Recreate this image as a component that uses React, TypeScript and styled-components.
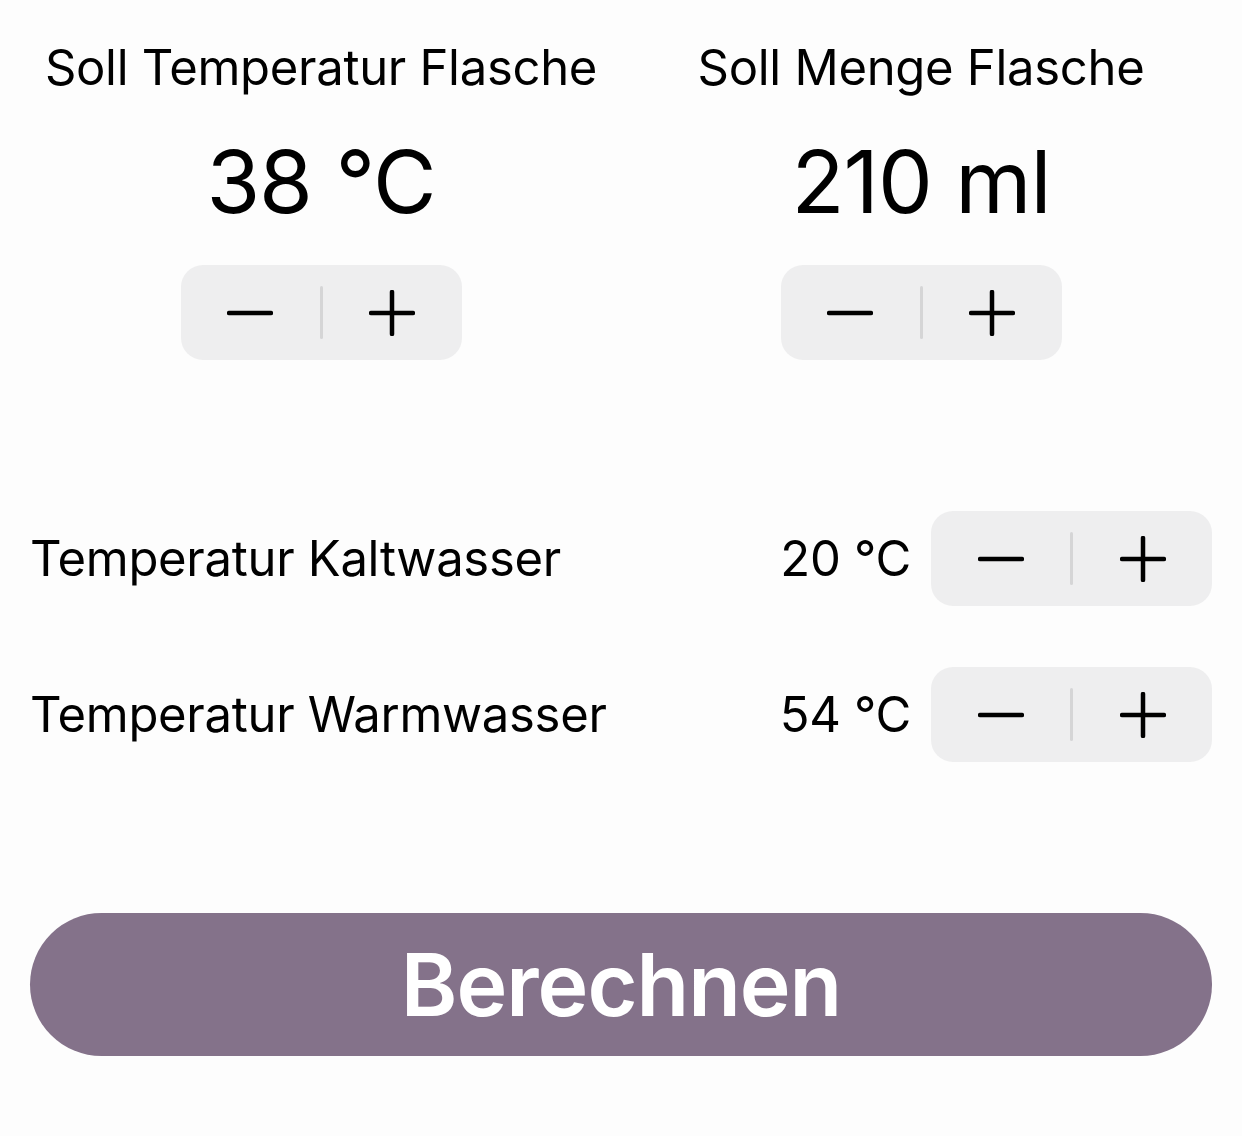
import React, { useState } from "react";
import styled, { createGlobalStyle } from "styled-components";

const GlobalStyle = createGlobalStyle`
  html, body {
    margin: 0;
    padding: 0;
    background: #fdfdfd;
  }
  body {
    font-family: Inter, "Liberation Sans", sans-serif;
    color: #000;
  }
`;

const Page = styled.div`
  width: 1242px;
  height: 1136px;
  box-sizing: border-box;
  padding: 0 30px;
  background: #fdfdfd;
  display: flex;
  flex-direction: column;
`;

const TopGrid = styled.div`
  display: grid;
  grid-template-columns: 1fr 1fr;
  margin: 0 -9px;
`;

const Column = styled.div`
  display: flex;
  flex-direction: column;
  align-items: center;
`;

const Title = styled.div`
  margin-top: 36px;
  font-size: 49px;
  line-height: 64px;
  letter-spacing: -0.3px;
  white-space: nowrap;
`;

const BigValue = styled.div`
  margin-top: 27px;
  font-size: 87px;
  line-height: 110px;
  letter-spacing: -1px;
  white-space: nowrap;
`;

const StepperBox = styled.div<{ $top?: number }>`
  margin-top: ${(p) => p.$top ?? 0}px;
  width: 281px;
  height: 95px;
  flex-shrink: 0;
  border-radius: 22px;
  background: #eeeeef;
  display: flex;
  align-items: center;
`;

const StepButton = styled.button`
  flex: 1;
  height: 100%;
  border: 0;
  background: transparent;
  padding: 0;
  display: flex;
  align-items: center;
  justify-content: center;
  cursor: pointer;
`;

const Divider = styled.div`
  width: 3px;
  height: 53px;
  border-radius: 2px;
  background: #d5d5d6;
`;

const Rows = styled.div`
  margin-top: 151px;
  display: flex;
  flex-direction: column;
  gap: 61px;
`;

const Row = styled.div`
  display: flex;
  align-items: center;
  height: 95px;
`;

const Label = styled.div`
  flex: 1;
  font-size: 49px;
  letter-spacing: -0.3px;
  white-space: nowrap;
`;

const RowValue = styled.div`
  font-size: 49px;
  letter-spacing: -0.3px;
  margin-right: 20px;
  white-space: nowrap;
`;

const CalcButton = styled.button`
  margin-top: 151px;
  height: 143px;
  width: 100%;
  border: 0;
  border-radius: 72px;
  background: #84728a;
  color: #fff;
  font-family: Inter, "Liberation Sans", sans-serif;
  font-size: 86px;
  font-weight: 600;
  letter-spacing: -1px;
  cursor: pointer;
`;

const Minus = () => (
  <svg width="46" height="46" viewBox="0 0 46 46">
    <line x1="2" y1="23" x2="44" y2="23" stroke="#000" strokeWidth="4.5" strokeLinecap="round" />
  </svg>
);

const Plus = () => (
  <svg width="46" height="46" viewBox="0 0 46 46">
    <line x1="2" y1="23" x2="44" y2="23" stroke="#000" strokeWidth="4.5" strokeLinecap="round" />
    <line x1="23" y1="2" x2="23" y2="44" stroke="#000" strokeWidth="4.5" strokeLinecap="round" />
  </svg>
);

const Stepper = ({
  top,
  onChange,
}: {
  top?: number;
  onChange: (d: number) => void;
}) => (
  <StepperBox $top={top}>
    <StepButton aria-label="weniger" onClick={() => onChange(-1)}>
      <Minus />
    </StepButton>
    <Divider />
    <StepButton aria-label="mehr" onClick={() => onChange(1)}>
      <Plus />
    </StepButton>
  </StepperBox>
);

export default function App() {
  const [target, setTarget] = useState(38);
  const [amount, setAmount] = useState(210);
  const [cold, setCold] = useState(20);
  const [warm, setWarm] = useState(54);

  return (
    <>
      <GlobalStyle />
      <Page>
        <TopGrid>
          <Column>
            <Title>Soll Temperatur Flasche</Title>
            <BigValue>{target} °C</BigValue>
            <Stepper top={28} onChange={(d) => setTarget(target + d)} />
          </Column>
          <Column>
            <Title>Soll Menge Flasche</Title>
            <BigValue>{amount} ml</BigValue>
            <Stepper top={28} onChange={(d) => setAmount(amount + d * 10)} />
          </Column>
        </TopGrid>

        <Rows>
          <Row>
            <Label>Temperatur Kaltwasser</Label>
            <RowValue>{cold} °C</RowValue>
            <Stepper onChange={(d) => setCold(cold + d)} />
          </Row>
          <Row>
            <Label>Temperatur Warmwasser</Label>
            <RowValue>{warm} °C</RowValue>
            <Stepper onChange={(d) => setWarm(warm + d)} />
          </Row>
        </Rows>

        <CalcButton>Berechnen</CalcButton>
      </Page>
    </>
  );
}
